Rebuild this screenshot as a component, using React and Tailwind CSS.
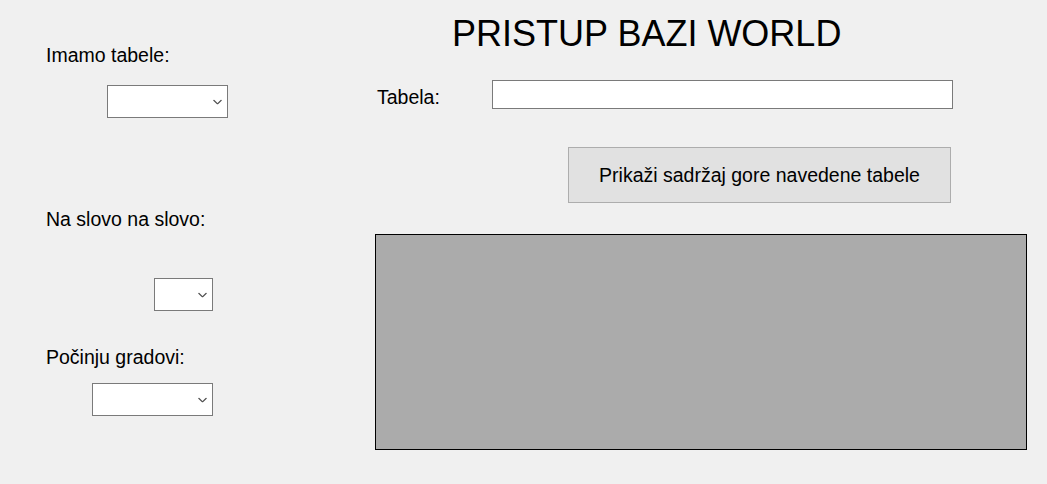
import React from 'react';

const Chevron = () => (
    <svg width="9" height="5" viewBox="0 0 9 5" className="absolute right-[5px] top-1/2 -translate-y-1/2">
        <path d="M0.5 0.5 L4.5 4.5 L8.5 0.5" fill="none" stroke="#505050" strokeWidth="1.2" />
    </svg>
);

const Combo = ({ className }) => (
    <div className={`relative h-[33px] bg-white border border-[#7a7a7a] ${className}`}>
        <Chevron />
    </div>
);

const Label = ({ children, className = '' }) => (
    <div className={`text-[19.5px] leading-[23px] text-black whitespace-nowrap ${className}`}>{children}</div>
);

export default function App() {
    return (
        <div className="flex h-[484px] w-full bg-[#f0f0f0] overflow-hidden" style={{ fontFamily: '"Liberation Sans", Arial, sans-serif' }}>
            <div className="flex w-[375px] shrink-0 flex-col items-start pl-[46px]">
                <Label className="mt-[44px]">Imamo tabele:</Label>
                <Combo className="mt-[18px] ml-[61px] w-[121px]" />
                <Label className="mt-[90px]">Na slovo na slovo:</Label>
                <Combo className="mt-[47px] ml-[108px] w-[59px]" />
                <Label className="mt-[35px]">Počinju gradovi:</Label>
                <Combo className="mt-[14px] ml-[46px] w-[121px]" />
            </div>

            <div className="flex flex-col items-start">
                <h1 className="mt-[14px] ml-[77px] text-[36px] leading-[40px] text-black whitespace-nowrap">PRISTUP BAZI WORLD</h1>

                <div className="mt-[26px] flex items-start">
                    <Label className="mt-[6px] ml-[2px] w-[115px]">Tabela:</Label>
                    <div className="h-[29px] w-[461px] bg-white border border-[#7a7a7a]" />
                </div>

                <button className="mt-[38px] ml-[193px] flex h-[56px] w-[383px] items-center justify-center border border-[#adadad] bg-[#e1e1e1] text-[19.5px] leading-[23px] text-black">
                    Prikaži sadržaj gore navedene tabele
                </button>

                <div className="mt-[31px] h-[216px] w-[652px] border border-black bg-[#ababab]" />
            </div>
        </div>
    );
}
